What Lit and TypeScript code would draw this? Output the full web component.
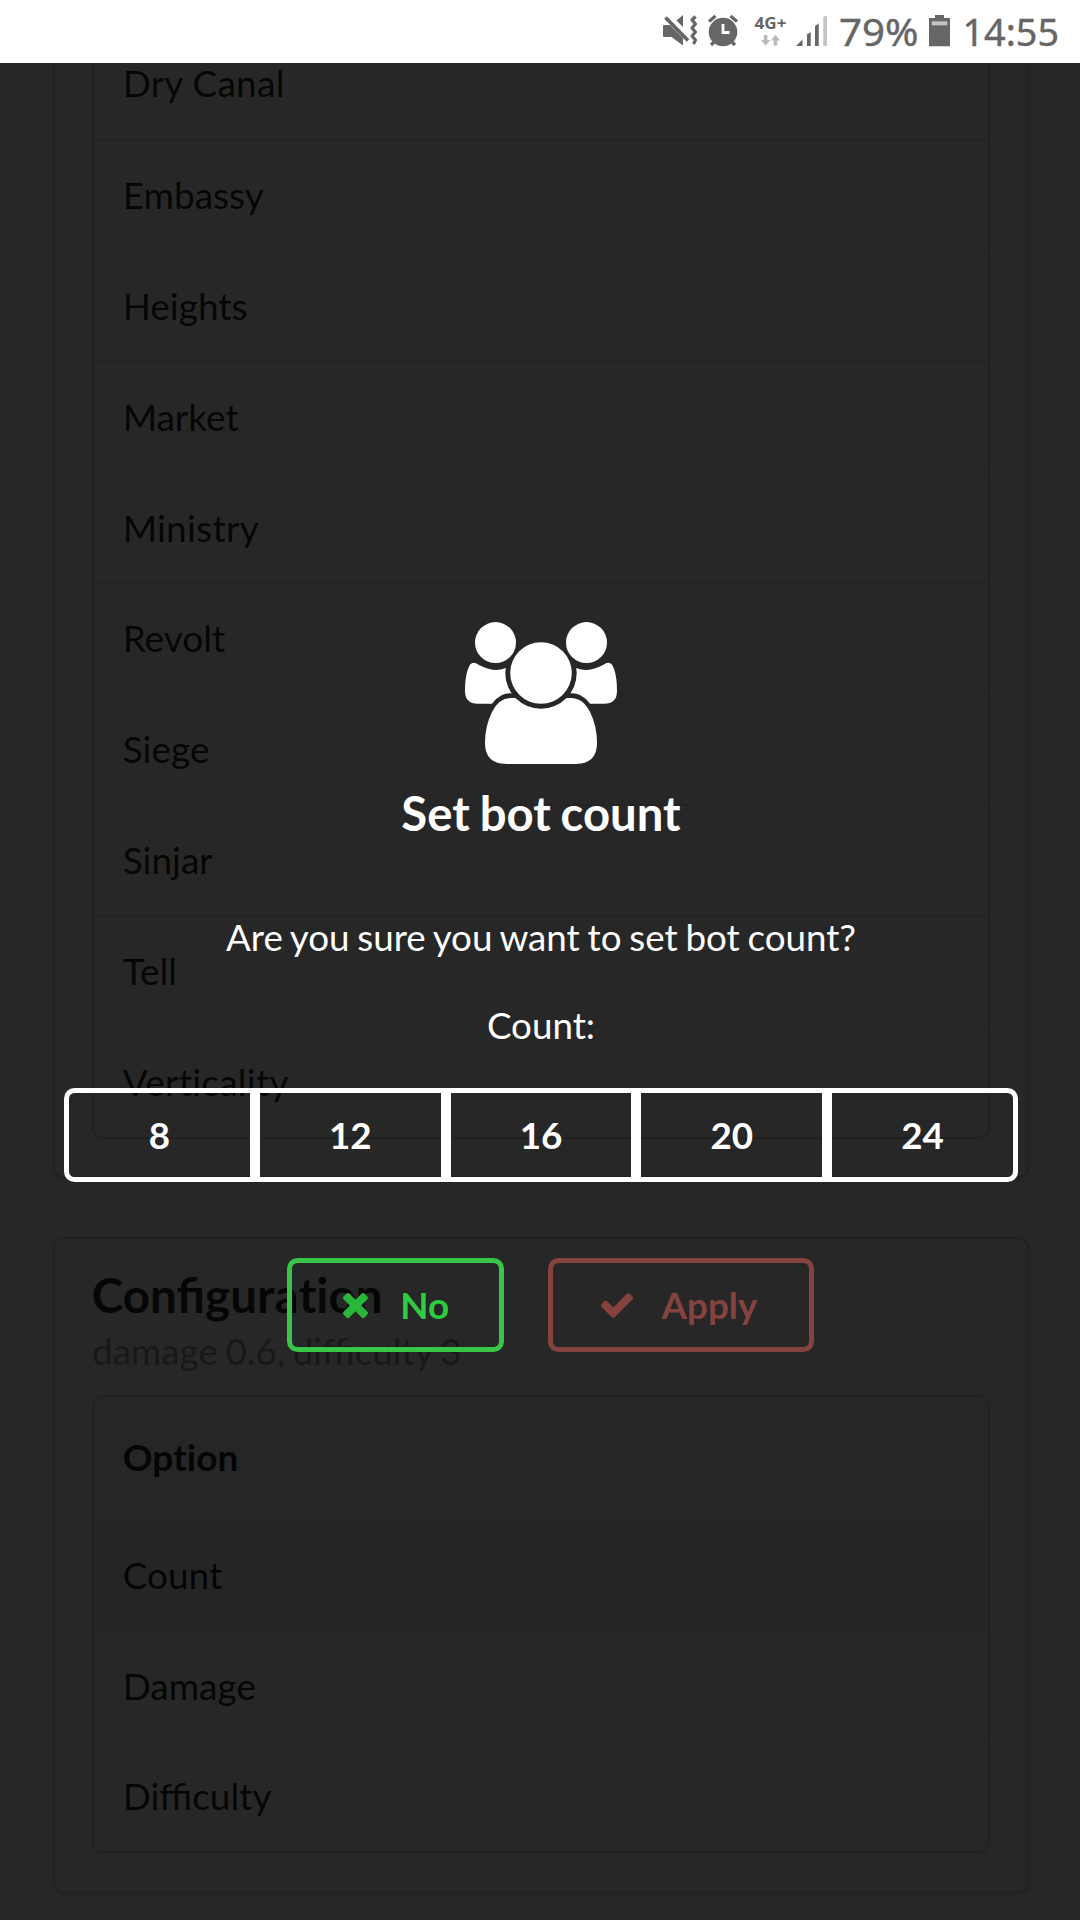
import { LitElement, html, css, svg } from "lit";
import { customElement } from "lit/decorators.js";

const MAPS = ["Dry Canal", "Embassy", "Heights", "Market", "Ministry", "Revolt", "Siege", "Sinjar", "Tell", "Verticality"];
const OPTIONS = ["Count", "Damage", "Difficulty"];
const COUNTS = [8, 12, 16, 20, 24];

@customElement("status-bar")
class StatusBar extends LitElement {
  static styles = css`
    :host { display: block; height: 63px; background: #fff; }
    svg { display: block; width: 1080px; height: 63px; }
    text { font-family: "Noto Sans", "Open Sans", sans-serif; fill: #666; }
    .big { font-size: 38px; stroke: #666; stroke-width: 0.4px; }
    .net { font-size: 16.6px; font-weight: 700; }
  `;
  render() {
    return html`<svg viewBox="0 0 1080 63" aria-label="Status bar">
      ${svg`
      <g fill="#666">
        <path d="M676.500 20.500L683 15v12z"/>
        <path d="M663 26q0-1 1-1h6l13 13v7.500L671.500 37H664q-1 0-1-1z"/>
        <path d="M665.500 17.500L688 40.500" stroke="#666" stroke-width="3.600"/>
        <path d="M695.500 16.500L692 20l3.500 4-3.500 4 3.500 4-3.500 4 3.500 4-2 4" fill="none" stroke="#666" stroke-width="3.200" stroke-linejoin="round"/>
        <circle cx="723" cy="32" r="14.300"/>
        <path d="M709 21.500l6.500-5.500M737 21.500l-6.500-5.500M716 40l-5 5M730 40l5 5" stroke="#666" stroke-width="3.200"/>
        <path d="M723 24v8.500h6.500" fill="none" stroke="#fff" stroke-width="2.800"/>
        <path d="M796 46l6.500-6.500v6.500z"/>
        <path d="M807 46V34.500l3.700-2.500v14z"/>
        <path d="M815 46V26l3.700-2.500V46z"/>
        <path d="M929 18h6v-3h9v3h6v28.300h-21z"/>
      </g>
      <path d="M823.300 46V17l3.700-1.500V46z" fill="#c4c4c4"/>
      <rect x="931.700" y="21.300" width="15.600" height="4" fill="#c4c4c4"/>
      <path d="M763.800 35h3.600v5h2.800l-4.600 5.800-4.600-5.800h2.800z M773.700 45.500h3.600v-5h2.800l-4.600-5.800-4.600 5.800h2.800z" fill="#bbb"/>
      <text class="net" x="754.500" y="29.300" textLength="32" lengthAdjust="spacingAndGlyphs">4G+</text>
      <text class="big" x="839" y="46" textLength="79.500" lengthAdjust="spacingAndGlyphs">79%</text>
      <text class="big" x="962.500" y="46" textLength="96.500" lengthAdjust="spacingAndGlyphs">14:55</text>`}
    </svg>`;
  }
}

@customElement("app-root")
class AppRoot extends LitElement {
  static styles = css`
    :host {
      display: flex; flex-direction: column; width: 1080px; height: 1920px; overflow: hidden;
      background: #fff; color: rgba(0, 0, 0, 0.87);
      font-family: Lato, sans-serif; font-size: 36.75px; line-height: 52.5px;
    }
    * { box-sizing: border-box; }
    .stage { position: relative; height: 1857px; overflow: hidden; }
    .page { display: flex; flex-direction: column; height: 100%; padding: 0 51.5px 0 52.5px; }
    .card {
      border: 2.6px solid #d6d6d7; border-radius: 10.5px; padding: 36.75px 36.75px 36.75px 37.75px;
      box-shadow: 0 2.6px 5px rgba(34, 36, 38, 0.12);
    }
    .maps { height: 1191px; flex: none; margin-top: -76px; }
    .rule { flex: none; height: 6px; margin: 38px -26px 15px; background: #f6f6f6; }
    .config { height: 656px; padding-top: 26px; flex: none; }
    .table { border: 2.6px solid #d8d8d9; border-radius: 10.5px; overflow: hidden; }
    .row {
      height: 110.9px; padding: 0 28.4px; display: flex; align-items: center;
      font-size: 37px; white-space: pre;
    }
    .row + .row { border-top: 2.6px solid rgba(34, 36, 38, 0.1); }
    .split { font-variant-ligatures: none; }
    .wide { letter-spacing: 0.25px; }
    .head { height: 122px; background: #f6f6f7; font-weight: 700; }
    .head + .row { border-top-color: transparent; }
    .shade { background: #f0f0f0; }
    .title { font-size: 47.6px; font-weight: 700; line-height: 60px; margin-left: -0.5px; }
    .meta { color: rgba(0, 0, 0, 0.4); margin-bottom: 17px; word-spacing: -1.8px; }
    .dimmer {
      position: absolute; inset: 0; background: rgba(0, 0, 0, 0.848); color: #fff;
      display: flex; flex-direction: column; align-items: center; padding: 557px 0 0 2px;
      word-spacing: -1.6px;
    }
    .users { width: 154px; height: 148px; display: block; }
    .dimmer h1 { margin: 9px 0 0; font-size: 47.25px; line-height: 72px; font-weight: 700; }
    .dimmer p { margin: 0; line-height: 52.5px; }
    .ask { padding-top: 62px; }
    .label { padding-top: 35px; }
    .counts { display: flex; width: 954px; height: 94px; margin-top: 37px; }
    .btn {
      border: 5.25px solid #fff; color: #fff; font-weight: 700; display: flex;
      align-items: center; justify-content: center; background: none; font-size: 36.75px;
      font-family: inherit; padding: 0; margin: 0;
    }
    .counts .btn { flex: 1; }
    .counts .btn:first-child { border-radius: 10.5px 0 0 10.5px; }
    .counts .btn:last-child { border-radius: 0 10.5px 10.5px 0; }
    .actions { display: flex; gap: 44px; margin-top: 76px; margin-left: 19px; }
    .actions .btn { height: 94px; border-radius: 10.5px; }
    .no { width: 217px; border-color: #39c549; color: #2ecc40; gap: 32.5px; padding-left: 1px; }
    .apply { width: 266px; border-color: #85433f; color: #85433f; gap: 29px; padding-right: 4px; }
    .no svg { width: 25px; height: 25px; fill: #29b73a; }
    .apply svg { width: 32px; height: 25px; fill: #85433f; }
  `;
  render() {
    const shoulder = "M9.500 42.700Q12 42.700 15 45Q31.500 53.500 43 47.500L52 46V74Q44 72 38 75Q32 78 28 83.700H14Q1 83.700 1 71Q1 57 4 49Q6 42.700 9.500 42.700z";
    return html`
      <status-bar></status-bar>
      <div class="stage">
        <div class="page">
          <section class="card maps">
            <div class="table">
              ${MAPS.map((m) => html`<div class="row ${/ti|ry/.test(m) ? "split wide" : ""}">${m}</div>`)}
            </div>
          </section>
          <div class="rule"></div>
          <section class="card config">
            <div class="title">Configura<span class="split">ti</span>on</div>
            <div class="meta">damage 0.6, difficulty 3</div>
            <div class="table">
              <div class="row head split">Option</div>
              ${OPTIONS.map((o, i) => html`<div class="row ${i === 0 ? "shade" : ""}">${o}</div>`)}
            </div>
          </section>
        </div>
        <div class="dimmer">
          <svg class="users" viewBox="0 0 154 148" fill="#fff">
            <mask id="ring">
              <rect width="154" height="148" fill="#fff"/>
              <circle cx="77" cy="53" r="35.700" fill="#000"/>
            </mask>
            <circle cx="31.500" cy="22.600" r="20.500"/>
            <circle cx="122.500" cy="22.600" r="20.500"/>
            <circle cx="77" cy="53" r="30.800"/>
            <g mask="url(#ring)">
              <path d=${shoulder}/>
              <path d=${shoulder} transform="translate(154) scale(-1 1)"/>
              <path d="M47 78H107Q119 78 126 92Q133 106 133 123Q133 144 111 144H43Q21 144 21 123Q21 106 28 92Q35 78 47 78z"/>
            </g>
          </svg>
          <h1>Set bot count</h1>
          <p class="ask">Are you sure you want to set bot count?</p>
          <p class="label">Count:</p>
          <div class="counts">${COUNTS.map((c) => html`<button class="btn">${c}</button>`)}</div>
          <div class="actions">
            <button class="btn no">
              <svg viewBox="302 366 1188 1188"><path d="M1490 1322q0 40-28 68l-136 136q-28 28-68 28t-68-28l-294-294-294 294q-28 28-68 28t-68-28l-136-136q-28-28-28-68t28-68l294-294-294-294q-28-28-28-68t28-68l136-136q28-28 68-28t68 28l294 294 294-294q28-28 68-28t68 28l136 136q28 28 28 68t-28 68l-294 294 294 294q28 28 28 68z"/></svg>No
            </button>
            <button class="btn apply">
              <svg viewBox="121 334 1550 1188"><path d="M1671 566q0 40-28 68l-724 724-136 136q-28 28-68 28t-68-28l-136-136-362-362q-28-28-28-68t28-68l136-136q28-28 68-28t68 28l294 295 656-657q28-28 68-28t68 28l136 136q28 28 28 68z"/></svg>Apply
            </button>
          </div>
        </div>
      </div>
    `;
  }
}
